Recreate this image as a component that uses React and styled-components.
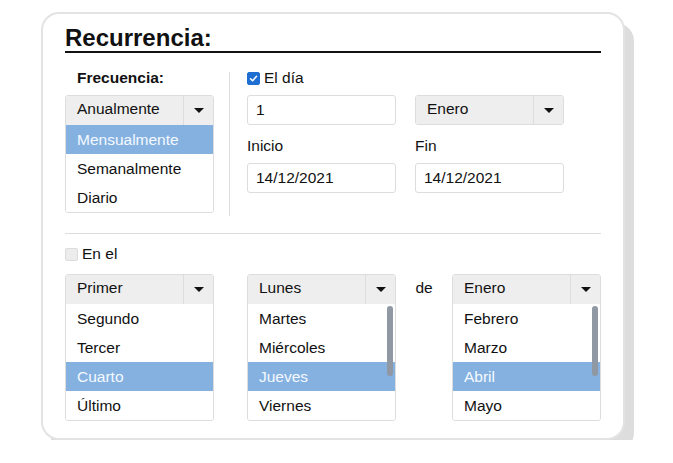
import React from "react";
import styled, { createGlobalStyle } from "styled-components";

const GlobalStyle = createGlobalStyle`
  body {
    margin: 0;
    background: #fff;
    font-family: "Liberation Sans", Arial, sans-serif;
    font-size: 15.5px;
    color: #1a1a1a;
  }
`;

const Page = styled.div`
  padding: 12px 0 0 41px;
`;

const Card = styled.div`
  width: 584px;
  box-sizing: border-box;
  background: #fff;
  border: 2px solid #e3e3e3;
  border-radius: 18px;
  padding: 11px 22px 17px;
  box-shadow: 9px 11px 0 #dddddd;
`;

const Title = styled.h1`
  margin: 0;
  font-size: 24px;
  font-weight: bold;
  line-height: 26px;
  color: #111;
  border-bottom: 2px solid #111;
`;

const Top = styled.div`
  display: flex;
  align-items: flex-start;
  margin-top: 16px;
`;

const FreqCol = styled.div`
  width: 149px;
  display: flex;
  flex-direction: column;
`;

const FieldLabel = styled.div`
  font-weight: ${(p) => (p.$bold ? "bold" : "normal")};
  padding-left: ${(p) => (p.$bold ? "12px" : "0")};
  line-height: 18px;
  margin: ${(p) => p.$margin || "0 0 8px"};
  color: #111;
`;

const VDivider = styled.div`
  width: 1px;
  height: 144px;
  background: #dddddd;
  margin: 3px 17px 0 15px;
`;

const DayGrid = styled.div`
  display: grid;
  grid-template-columns: 149px 149px;
  column-gap: 19px;
  align-items: start;
`;

const CheckRow = styled.div`
  grid-column: ${(p) => (p.$span ? "1 / -1" : "auto")};
  display: flex;
  align-items: center;
  gap: 4px;
  height: 18px;
  line-height: 18px;
  margin: ${(p) => p.$margin || "0 0 8px"};
  color: #111;
`;

const Box = styled.span`
  width: 13px;
  height: 13px;
  box-sizing: border-box;
  border-radius: 2px;
  display: inline-flex;
  align-items: center;
  justify-content: center;
  background: ${(p) => (p.$checked ? "#1f6fd2" : "#ececec")};
  border: 1px solid ${(p) => (p.$checked ? "#1f6fd2" : "#dcdcdc")};
`;

const Input = styled.div`
  height: 30px;
  box-sizing: border-box;
  border: 1px solid #dddddd;
  border-radius: 3px;
  padding: 0 8px 1px;
  display: flex;
  align-items: center;
  color: #111;
  background: #fff;
`;

const Separator = styled.div`
  height: 1px;
  background: #dddddd;
  margin-top: 17px;
`;

const BottomRow = styled.div`
  display: flex;
  align-items: flex-start;
  margin-top: 11px;
`;

const Spacer = styled.div`
  width: 33px;
`;

const De = styled.div`
  flex: 1;
  text-align: center;
  line-height: 28px;
  color: #111;
`;

const SelectBox = styled.div`
  width: 149px;
  box-sizing: border-box;
  border: 1px solid #dddddd;
  border-radius: 3px;
  overflow: hidden;
  background: #fff;
`;

const SelectHead = styled.div`
  display: flex;
  height: ${(p) => (p.$closed ? "28px" : "29px")};
  background: #eeeeee;
`;

const SelectValue = styled.div`
  flex: 1;
  padding: 0 0 3px 11px;
  display: flex;
  align-items: center;
  color: #111;
`;

const ArrowCell = styled.div`
  width: 29px;
  border-left: 1px solid #dddddd;
  display: flex;
  align-items: center;
  justify-content: center;
`;

const Caret = styled.span`
  width: 0;
  height: 0;
  border-left: 5px solid transparent;
  border-right: 5px solid transparent;
  border-top: 5px solid #111;
`;

const OptionList = styled.div`
  position: relative;
`;

const Option = styled.div`
  height: 29px;
  line-height: 29px;
  padding-left: 11px;
  background: ${(p) => (p.$active ? "#84b1e0" : "#fff")};
  color: ${(p) => (p.$active ? "#f5f9ff" : "#111")};
`;

const Thumb = styled.div`
  position: absolute;
  right: 2px;
  top: 2px;
  width: 6px;
  height: 70px;
  border-radius: 3px;
  background: #8f98a3;
`;

const Check = ({ checked }) => (
  <Box $checked={checked}>
    {checked && (
      <svg width="9" height="9" viewBox="0 0 9 9">
        <polyline
          points="1.5,4.8 3.6,6.8 7.6,2.2"
          fill="none"
          stroke="#fff"
          strokeWidth="1.5"
          strokeLinecap="round"
          strokeLinejoin="round"
        />
      </svg>
    )}
  </Box>
);

const Select = ({ value, options, active, scroll }) => (
  <SelectBox>
    <SelectHead $closed={!options}>
      <SelectValue>{value}</SelectValue>
      <ArrowCell>
        <Caret />
      </ArrowCell>
    </SelectHead>
    {options && (
      <OptionList>
        {options.map((o, i) => (
          <Option key={o} $active={i === active}>
            {o}
          </Option>
        ))}
        {scroll && <Thumb />}
      </OptionList>
    )}
  </SelectBox>
);

export default function App() {
  return (
    <Page>
      <GlobalStyle />
      <Card>
        <Title>Recurrencia:</Title>
        <Top>
          <FreqCol>
            <FieldLabel $bold>Frecuencia:</FieldLabel>
            <Select
              value="Anualmente"
              options={["Mensualmente", "Semanalmente", "Diario"]}
              active={0}
            />
          </FreqCol>
          <VDivider />
          <DayGrid>
            <CheckRow $span>
              <Check checked />
              El día
            </CheckRow>
            <Input>1</Input>
            <Select value="Enero" />
            <FieldLabel $margin="12px 0 8px">Inicio</FieldLabel>
            <FieldLabel $margin="12px 0 8px">Fin</FieldLabel>
            <Input>14/12/2021</Input>
            <Input>14/12/2021</Input>
          </DayGrid>
        </Top>
        <Separator />
        <CheckRow $margin="11px 0 0">
          <Check />
          En el
        </CheckRow>
        <BottomRow>
          <Select
            value="Primer"
            options={["Segundo", "Tercer", "Cuarto", "Último"]}
            active={2}
          />
          <Spacer />
          <Select
            value="Lunes"
            options={["Martes", "Miércoles", "Jueves", "Viernes"]}
            active={2}
            scroll
          />
          <De>de</De>
          <Select
            value="Enero"
            options={["Febrero", "Marzo", "Abril", "Mayo"]}
            active={2}
            scroll
          />
        </BottomRow>
      </Card>
    </Page>
  );
}
